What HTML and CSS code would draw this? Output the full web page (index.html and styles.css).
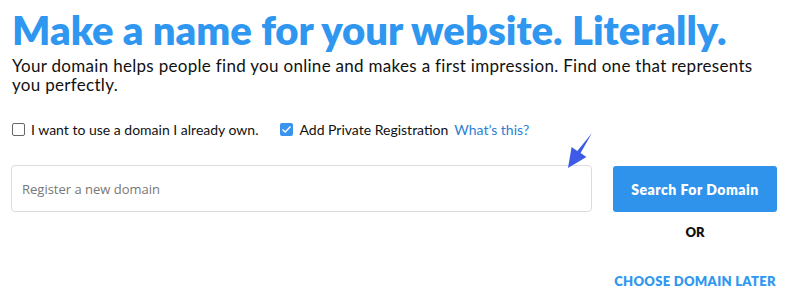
FILE: index.html
```html
<!DOCTYPE html>
<html>
<head>
    <link rel="stylesheet" href="styles.css">
</head>
<body>
    <div class="page">
        <h1 class="title">Make a name for your website. Literally.</h1>
        <p class="lead">Your domain helps people find you online and makes a first impression. Find one that represents you perfectly.</p>

        <div class="options">
            <label class="option">
                <span class="box"></span>
                I want to use a domain I already own.
            </label>
            <label class="option">
                <span class="box checked">
                    <svg width="11" height="9" viewBox="0 0 11 9"><path d="M1.5 4.5 L4.2 7 L9.5 1.5" fill="none" stroke="#fff" stroke-width="1.4"/></svg>
                </span>
                Add Private Registration <a class="help" href="#">What’s this?</a>
            </label>
        </div>

        <div class="search-row">
            <div class="field">
                <input type="text" placeholder="Register a new domain">
                <svg class="pointer" width="40" height="45" viewBox="0 0 40 45">
                    <polygon points="32,5 20.6,25.1 26.4,29.1 8,40 11.6,18.9 17.3,22.9" fill="#3d5be6"/>
                </svg>
            </div>
            <div class="actions">
                <button>Search For Domain</button>
                <div class="or">OR</div>
                <a class="later" href="#">CHOOSE DOMAIN LATER</a>
            </div>
        </div>
    </div>
</body>
</html>
```

FILE: styles.css
```css
body {
    margin: 0;
    background: #fff;
    font-family: Lato, "Open Sans", sans-serif;
    color: #111;
}

.page {
    padding: 0 15px 0 12px;
}

.title {
    margin: 0;
    padding-top: 8px;
    font-size: 40px;
    line-height: 44px;
    font-weight: 800;
    color: #3097f0;
}

.lead {
    margin: 4px 0 0;
    font-size: 17px;
    line-height: 19px;
    letter-spacing: 0.3px;
    color: #111;
}

.options {
    display: flex;
    gap: 22px;
    margin-top: 27px;
}

.option {
    display: flex;
    align-items: center;
    gap: 6px;
    font-size: 14px;
    color: #111;
}

.box {
    width: 11px;
    height: 11px;
    border: 1px solid #666;
    border-radius: 2px;
    display: flex;
    align-items: center;
    justify-content: center;
}

.box.checked {
    width: 13px;
    height: 13px;
    border: none;
    background: #3a94ee;
}

.help {
    color: #2c7fd2;
    text-decoration: none;
}

.search-row {
    display: flex;
    gap: 21px;
    margin-top: 27px;
}

.field {
    position: relative;
    flex: 1;
    margin-left: -1px;
}

.field input {
    box-sizing: border-box;
    width: 100%;
    height: 47px;
    border: 1px solid #dcdcdc;
    border-radius: 4px;
    padding: 0 10px;
    font-family: "Open Sans", sans-serif;
    font-size: 13px;
    outline: none;
}

.field input::placeholder {
    color: #777;
}

.pointer {
    position: absolute;
    left: 549px;
    top: -37px;
}

.actions {
    width: 164px;
    display: flex;
    flex-direction: column;
    align-items: center;
}

.actions button {
    width: 164px;
    height: 46px;
    margin-top: 1px;
    border: none;
    border-radius: 3px;
    background: #2f93ec;
    color: #fff;
    font-family: Lato, sans-serif;
    font-weight: 800;
    font-size: 14px;
    letter-spacing: 0.5px;
    cursor: pointer;
}

.or {
    margin-top: 12px;
    font-weight: 800;
    font-size: 13px;
    color: #111;
}

.later {
    margin-top: 33px;
    font-weight: 800;
    font-size: 13px;
    color: #3097f0;
    text-decoration: none;
    letter-spacing: 0.3px;
}
```
